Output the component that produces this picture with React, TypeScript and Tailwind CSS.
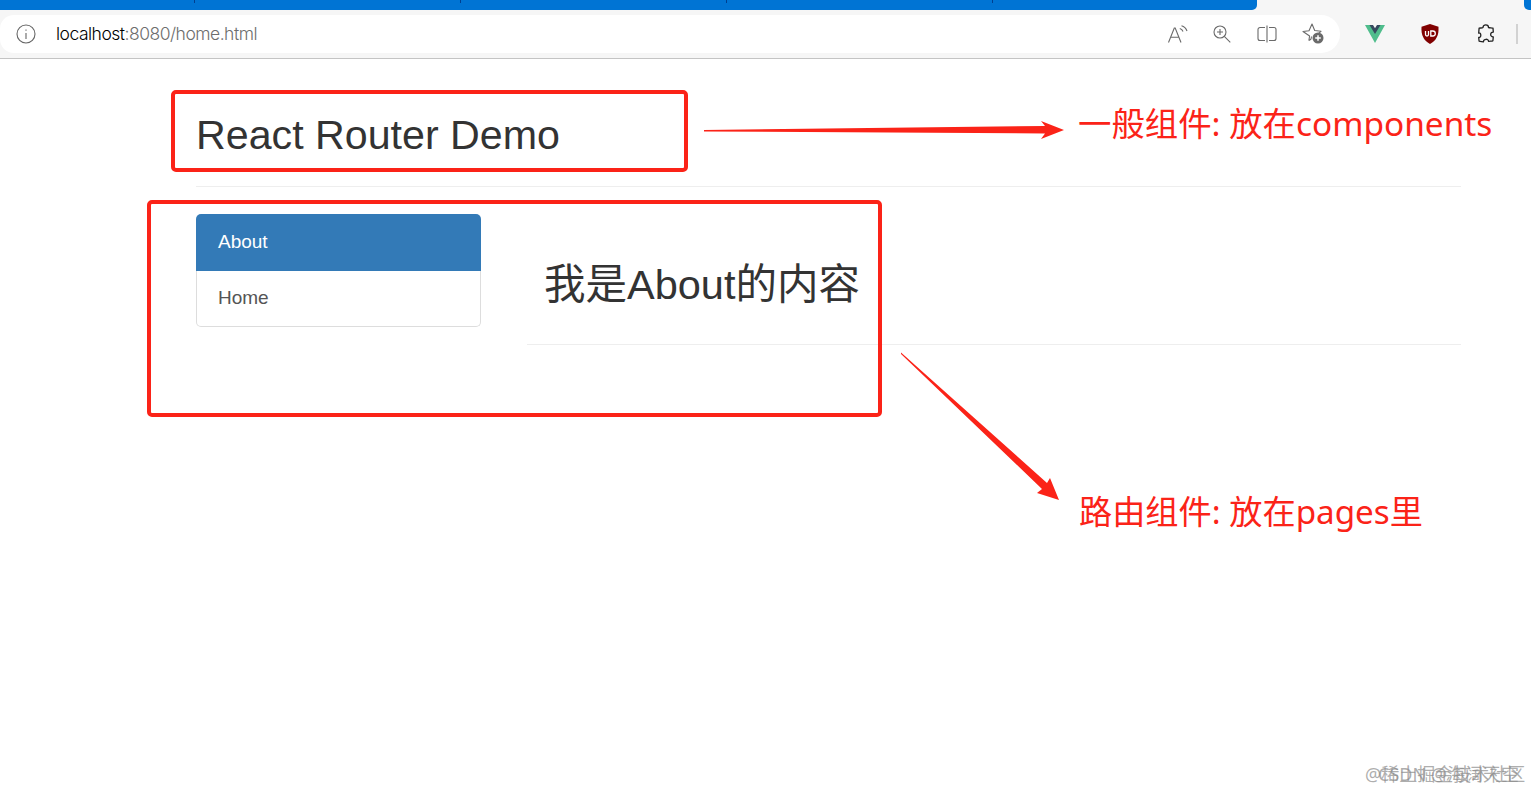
const sans = "font-['Liberation_Sans','Noto_Sans_CJK_SC',sans-serif]";

const Toolbar = () => (
  <div className="h-[59px] bg-[#f6f6f6] border-b border-[#c4c4c4]">
    <div className="flex h-[10px]">
      <div className="relative w-[1257px] bg-[#0074d4] rounded-br-[5px]">
        <span className="absolute left-[194px] top-0 h-[3px] w-px bg-[#003f8f]" />
        <span className="absolute left-[460px] top-0 h-[3px] w-px bg-[#003f8f]" />
        <span className="absolute left-[726px] top-0 h-[3px] w-px bg-[#003f8f]" />
        <span className="absolute left-[992px] top-0 h-[3px] w-px bg-[#003f8f]" />
      </div>
      <div className="flex-1" />
      <div className="w-[7px] bg-[#0074d4] rounded-bl-[5px]" />
    </div>
    <div className="flex items-center h-[48px]">
      <div className="flex items-center w-[1340px] h-[38px] bg-white rounded-r-[19px] rounded-l-[14px]">
        <svg width="20" height="20" viewBox="0 0 20 20" fill="none" stroke="#666" strokeWidth="1.1" className="ml-[16px] -mt-[1px]">
          <circle cx="10" cy="10" r="9" />
          <path d="M10 9v6M10 5.500v1.200" />
        </svg>
        <div className="ml-[20px] text-[17.500px] tracking-[-0.5px] font-['Inter','Noto_Sans',sans-serif] font-light text-[#6d6d6d]">
          <span className="text-black">localhost</span>:8080/home.html
        </div>
        <div className="flex-1" />
        <div className="flex items-center mr-[16px] -mt-[1px]">
          <svg width="20" height="18" viewBox="0 0 20 18" fill="none" stroke="#6a6a6a" strokeWidth="1.100">
            <path d="M.5 17.500 6.300 3h.9l5.800 14.500M2.500 12.300h8.500" />
            <path d="M11.800 3.500c1.500.4 2.700 1.500 3.200 3M13.500.8c2.500.7 4.600 2.700 5.500 5.200" />
          </svg>
          <svg width="18" height="18" viewBox="0 0 18 18" fill="none" stroke="#6a6a6a" strokeWidth="1.100" className="ml-[25px]">
            <circle cx="7" cy="7" r="6" />
            <path d="M11.300 11.300l6 6M7 4v6M4 7h6" />
          </svg>
          <svg width="20" height="18" viewBox="0 0 20 18" fill="none" stroke="#6a6a6a" strokeWidth="1.100" className="ml-[26px]">
            <path d="M8 2.500H3a2 2 0 0 0-2 2v9a2 2 0 0 0 2 2h5M12 2.500h5a2 2 0 0 1 2 2v9a2 2 0 0 1-2 2h-5M10 .5v17" />
          </svg>
          <svg width="22" height="21" viewBox="0 0 22 21" fill="none" stroke="#6a6a6a" strokeWidth="1.100" className="ml-[25px]">
            <path d="M9.500 13.500 9 16l-1.300 1.200-.8.100.7-4.300L1 8.500l6-.8L10 1l2.700 6.500 6.300.8-2.700 2.400" strokeLinejoin="round" />
            <circle cx="16" cy="15" r="5.500" fill="#6a6a6a" stroke="none" />
            <path d="M16 12.200v5.600M13.200 15h5.600" stroke="#fff" strokeWidth="1.500" />
          </svg>
        </div>
      </div>
      <svg width="20" height="18" viewBox="0 0 20 18" className="ml-[25px] -mt-[1px]">
        <path d="M0 0h5.500L10 7l4.500-7H20L10 18z" fill="#4fbd8c" />
        <path d="M4.500 0H8l2 3.200L12 0h3.500L10 9z" fill="#35495e" />
      </svg>
      <svg width="18" height="20" viewBox="0 0 18 20" className="ml-[36px] -mt-[1px]">
        <path d="M9 0l8.500 2.800C18 11 15.500 16.500 9 20 2.500 16.500 0 11 .5 2.800z" fill="#800000" />
        <path d="M4.500 7v3.500a1.500 1.500 0 0 0 3 0V7M9.800 7v5h2a2.500 2.500 0 0 0 0-5z" fill="none" stroke="#fff" strokeWidth="1.300" />
      </svg>
      <svg width="18" height="20" viewBox="0 0 18 20" fill="none" stroke="#222" strokeWidth="1.300" className="ml-[38px] -mt-[1px]">
        <path d="M6 3.500C6 0 11.500 0 11.500 3.500c1.500.4 3 .2 4.500.6l.3 4c-3.500-.3-3.500 5 0 4.700l-.4 4c-1.500.4-3 .2-4.400.6C11.800 14.500 6.200 14.500 6.500 17.800c-1.500-.3-3-.2-4.400-.6l-.4-3.700c2.800.4 2.800-5.200 0-4.500l.4-4.800c1.400-.3 3-.1 3.900-.7z" strokeLinejoin="round" />
      </svg>
      <div className="ml-[21px] -mt-[1px] w-[2px] h-[20px] bg-[#d2d2d2]" />
    </div>
  </div>
);

const Annotations = () => (
  <>
    <div className="absolute left-[171px] top-[90px] w-[517px] h-[82px] border-[4px] border-[#fb2318] rounded-[5px]" />
    <div className="absolute left-[147px] top-[200px] w-[735px] h-[217px] border-[4px] border-[#fb2318] rounded-[5px]" />
    <svg width="1531" height="791" viewBox="0 0 1531 791" className="absolute left-0 top-0 pointer-events-none">
      <path d="M704 130 1045 126 1041 121 1064 130 1041 139 1045 133.500 704 131.500z" fill="#fb2318" />
      <path d="M901 352.500 1047 483 1050 478 1059 500 1037 493 1042 489 901 354z" fill="#fb2318" />
    </svg>
    <div className="absolute left-[1078px] top-[100px] text-[33.400px] leading-[46px] text-[#fb2318] font-['Noto_Sans','Noto_Sans_CJK_SC',sans-serif] whitespace-nowrap">
      一般组件: 放在components
    </div>
    <div className="absolute left-[1079px] top-[489px] text-[33.200px] leading-[46px] text-[#fb2318] font-['Noto_Sans','Noto_Sans_CJK_SC',sans-serif] whitespace-nowrap">
      路由组件: 放在pages里
    </div>
    <div className="absolute left-[1365px] top-[762px] text-[18px] leading-[24px] text-[#8a8a8a]/70 font-['Noto_Sans','Noto_Sans_CJK_SC',sans-serif] whitespace-nowrap">
      @稀土掘金技术社区
    </div>
    <div className="absolute left-[1378px] top-[762px] text-[18px] leading-[24px] text-[#8a8a8a]/70 font-['Noto_Sans','Noto_Sans_CJK_SC',sans-serif] whitespace-nowrap">
      CSDN @海阔天空
    </div>
  </>
);

export default function App() {
  return (
    <div className={`relative w-[1531px] h-[791px] bg-white overflow-hidden ${sans}`}>
      <Toolbar />
      <div className="w-[1265px] ml-[196px]">
        <div className="pt-[53px] pb-[27px] border-b border-[#eeeeee]">
          <h1 className="text-[41.200px] leading-[47px] text-[#333333]">React Router Demo</h1>
        </div>
        <div className="flex mt-[27px]">
          <div className="w-[285px] h-[113px] flex flex-col text-[19px]">
            <div className="h-[57px] flex items-center pl-[22px] bg-[#337ab7] text-white rounded-t-[5px]">About</div>
            <div className="h-[56px] flex items-center pl-[21px] border border-t-0 border-[#dddddd] text-[#555555] rounded-b-[5px]">Home</div>
          </div>
          <div className="flex-1 ml-[46px]">
            <div className="pt-[47px] pb-[36px] pl-[17px] border-b border-[#eeeeee]">
              <h2 className="text-[41.500px] leading-[47px] text-[#333333]">我是About的内容</h2>
            </div>
          </div>
        </div>
      </div>
      <Annotations />
    </div>
  );
}
